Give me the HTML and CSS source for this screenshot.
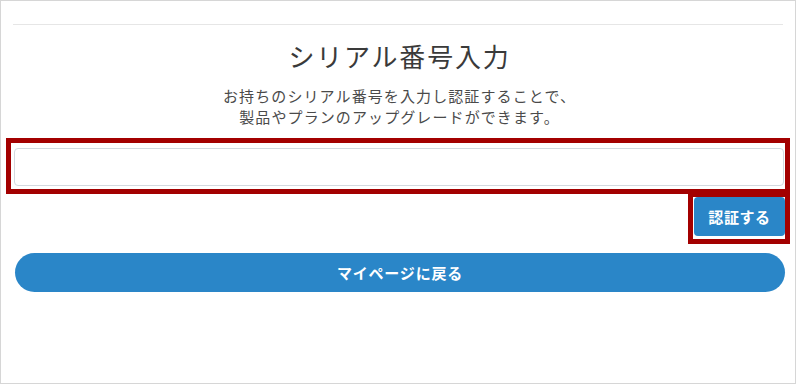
FILE: index.html
```html
<!DOCTYPE html>
<html lang="ja">
<head>
<meta charset="utf-8">
<title>シリアル番号入力</title>
<link rel="stylesheet" href="styles.css">
</head>
<body>
<main class="page">
  <hr class="rule">
  <h1 class="title">シリアル番号入力</h1>
  <p class="lead">お持ちのシリアル番号を入力し認証することで、<br>製品やプランのアップグレードができます。</p>
  <div class="field marked">
    <input class="serial-input" type="text" aria-label="シリアル番号">
  </div>
  <div class="actions">
    <button class="btn-verify marked" type="button">認証する</button>
  </div>
  <button class="btn-back" type="button">マイページに戻る</button>
</main>
</body>
</html>
```

FILE: styles.css
```css
* { box-sizing: border-box; }

html, body {
  margin: 0;
  padding: 0;
}

body {
  width: 796px;
  height: 384px;
  border: 1px solid #d6d6d6;
  background: #ffffff;
  font-family: "Noto Sans CJK JP", "Noto Sans", sans-serif;
  color: #333333;
  overflow: hidden;
}

.page {
  display: flex;
  flex-direction: column;
  padding: 0 10px 0 13px;
}

.rule {
  margin: 23px 2px 0 -1px;
  border: 0;
  border-top: 1px solid #e6e6e6;
  height: 0;
}

.title {
  margin: 14px 0 0;
  font-size: 26px;
  line-height: 34px;
  font-weight: 400;
  letter-spacing: 1.8px;
  text-align: center;
  color: #3a3a3a;
}

.lead {
  margin: 12px 0 0;
  font-size: 15px;
  line-height: 21px;
  letter-spacing: 1.1px;
  text-align: center;
  color: #4a4a4a;
}

.field {
  margin-top: 21px;
  margin-right: 1px;
  position: relative;
}

.serial-input {
  display: block;
  width: 100%;
  height: 38px;
  border: 1px solid #d3d9df;
  border-radius: 4px;
  background: #ffffff;
  font-family: inherit;
  font-size: 15px;
  padding: 6px 12px;
  outline: none;
}

.actions {
  margin-top: 11px;
  display: flex;
  justify-content: flex-end;
}

.btn-verify {
  position: relative;
  height: 39px;
  width: 91px;
  padding: 0;
  border: 0;
  border-radius: 4px;
  background: #2a86c8;
  color: #ffffff;
  font-family: inherit;
  font-size: 15px;
  font-weight: 700;
  letter-spacing: 0.6px;
}

.btn-back {
  margin-top: 17px;
  margin-left: 1px;
  height: 39px;
  border: 0;
  border-radius: 20px;
  background: #2a86c8;
  color: #ffffff;
  font-family: inherit;
  font-size: 15px;
  font-weight: 700;
  letter-spacing: 0.8px;
}

/* red annotation frames drawn over the marked elements */
.marked::after {
  content: "";
  position: absolute;
  border: 5px solid #a30000;
  pointer-events: none;
}

.field.marked::after {
  top: -10px;
  left: -8px;
  right: -6px;
  bottom: -8px;
}

.btn-verify.marked::after {
  top: -5px;
  left: -6px;
  right: -5px;
  bottom: -8px;
}
```
